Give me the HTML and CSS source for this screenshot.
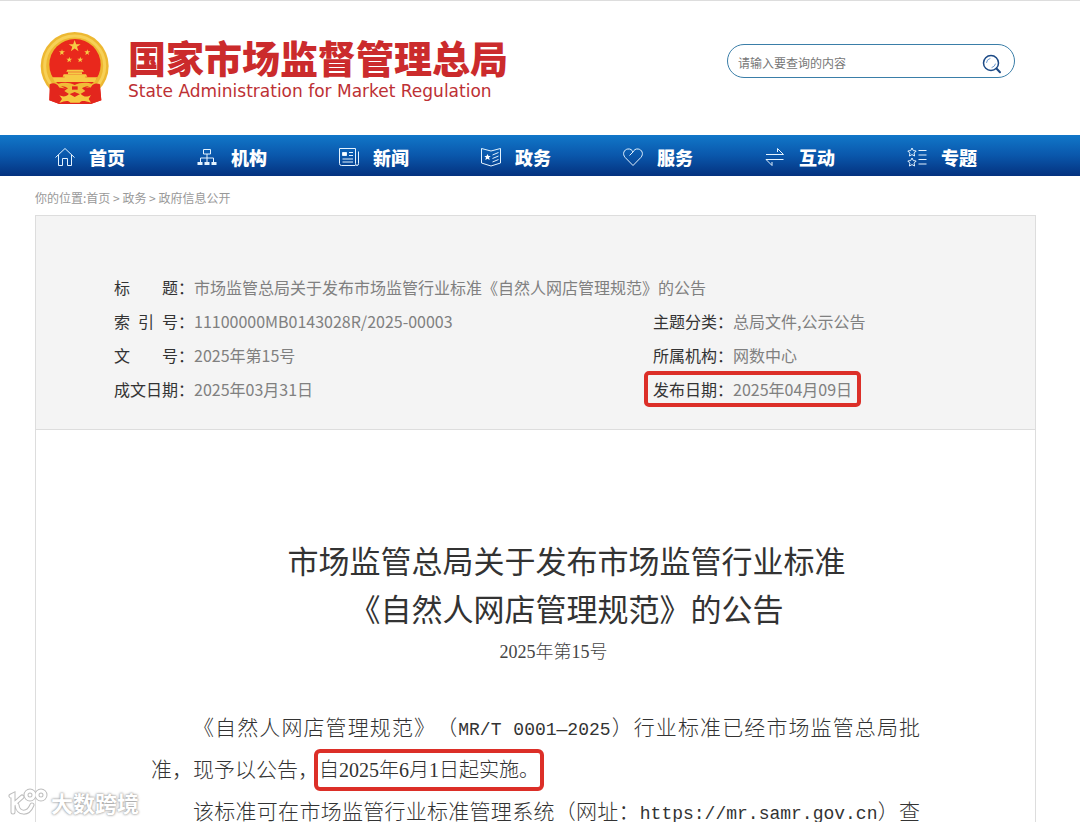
FILE: index.html
```html
<!DOCTYPE html>
<html lang="zh-CN">
<head>
<meta charset="utf-8">
<meta name="viewport" content="width=device-width, initial-scale=1">
<title>国家市场监督管理总局</title>
<link rel="stylesheet" href="styles.css">
</head>
<body>
<header class="header">
  <div class="brand">
    <svg class="emblem" viewBox="0 0 210 218" aria-hidden="true">
      <path fill="#e3261d" d="M32 150 28 206 58 217H152L184 206 178 150Z"/>
      <circle cx="104" cy="103" r="102" fill="#edb832"/>
      <circle cx="104" cy="103" r="90" fill="none" stroke="#f7d056" stroke-width="9"/>
      <circle cx="105" cy="99" r="77" fill="#e9281c"/>
      <g fill="#f6cb45">
        <path d="M104 25l4.500 12.500h13.500l-11 8 4.500 13-11.500-8-11.500 8 4.500-13-11-8h13.500z"/>
        <path d="M66 53l2 6h7l-6 4 2 7-5-4-6 4 2-7-5-4h7zM142 53l2 6h7l-6 4 2 7-5-4-6 4 2-7-5-4h7zM88 75l2 6h7l-6 4 2 7-5-4-6 4 2-7-5-4h7zM121 75l2 6h7l-6 4 2 7-5-4-6 4 2-7-5-4h7z"/>
        <path d="M82 114H128L132 120H79ZM84 122H126V127H84ZM71 128H138L142 135H136V139H74V135H68Z"/>
        <path d="M37 137H172L164 151H44Z"/>
      </g>
      <path fill="#e3261d" d="M29 158C40 151 52 156 60 168L82 171 104 153 128 170 150 167C160 154 170 153 180 158L184 206 152 217H58L28 206Z"/>
      <path fill="#f0bd37" d="M52 157C68 152 87 151 104 160 121 151 143 152 158 157L152 168C145 160 133 164 126 170L136 178 120 188 104 181 88 188 73 178 84 170C74 163 64 161 58 168Z"/>
      <path fill="#f6c940" d="M58 190C70 198 80 194 87 186L104 196 122 186C130 195 140 198 153 190L146 202 153 213C135 207 123 205 119 213H91C86 205 74 207 58 214L66 202Z"/>
      <path fill="#e3261d" d="M96 164h17v10H96z"/>
    </svg>
    <div class="brand-text">
      <h1 class="brand-name">国家市场监督管理总局</h1>
      <p class="brand-en">State Administration for Market Regulation</p>
    </div>
  </div>
  <form class="search" role="search">
    <input class="search-input" type="text" placeholder="请输入要查询的内容" aria-label="请输入要查询的内容">
    <button class="search-button" type="button" aria-label="搜索">
      <svg viewBox="0 0 20 20" width="20" height="20" fill="none" stroke="#1c4a86" stroke-linecap="round" aria-hidden="true">
        <circle cx="9" cy="9" r="7.500" stroke-width="1.500"/>
        <path d="M4.500 8.500A4.500 4.500 0 0 1 8 4.500M10 13.500A5 5 0 0 0 13.500 10" stroke="#6d9bd0"/>
        <path d="M14.500 14.500 18 18.300" stroke-width="2"/>
      </svg>
    </button>
  </form>
</header>

<nav class="nav">
  <a class="nav-item" href="#"><svg class="nav-icon" viewBox="0 0 20 20" aria-hidden="true"><path d="M.5 10.500 10 1.500 19.500 10.500M3.500 8V18.500H7.500V11.500H12.500V18.500H16.500V8"/></svg>首页</a>
  <a class="nav-item" href="#"><svg class="nav-icon" viewBox="0 0 20 20" aria-hidden="true"><path d="M6.500 2.500h7v4.500h-7zM10 7v4M3.500 15V11H16.500V15M10 11v4"/><path d="M.5 16.500H5.500M7.500 16.500h5M14.500 16.500h5" stroke-width="3"/></svg>机构</a>
  <a class="nav-item" href="#"><svg class="nav-icon" viewBox="0 0 20 20" aria-hidden="true"><path d="M16.500 18.500H2.500Q.5 18.500.5 16.500V1.500H16.500V16.500Q16.500 18.500 18 18.500 19.500 18.500 19.500 16.500V4.500M10 5.500h4M10 8.500h4M3.500 12h10.500M3.500 15h10.500"/><path d="M3.500 5.500h4v3h-4z" fill="#fff"/></svg>新闻</a>
  <a class="nav-item" href="#"><svg class="nav-icon" viewBox="0 0 20 20" aria-hidden="true"><path d="M.5 1.500 10 4 19.500 1.500V16L10 19 .5 16ZM11.500 8l6-2.500M11.500 11.500l6-2.500M11.500 15l6-2.500"/><path d="M6.500 7l1 2h2.200l-1.700 1.600.7 2.400-2.200-1.300L4.300 13l.7-2.400L3.300 9h2.200z" fill="#fff" stroke="none"/></svg>政务</a>
  <a class="nav-item" href="#"><svg class="nav-icon" viewBox="0 0 20 20" aria-hidden="true"><path d="M10 18.500 2.200 10.500C-1 7 1 2.500 4.800 2 7.500 1.600 9 3 10 5 11 3 12.500 1.600 15.200 2 19 2.500 21 7 17.800 10.500ZM10 5 6.500 8.500"/></svg>服务</a>
  <a class="nav-item" href="#"><svg class="nav-icon" viewBox="0 0 20 20" aria-hidden="true"><path d="M1 7.500H18.500L12.500 1.500V5M18.500 12.500H1L7 18.500V15"/></svg>互动</a>
  <a class="nav-item" href="#"><svg class="nav-icon" viewBox="0 0 20 20" aria-hidden="true"><path d="M5 1l1.300 2.600 2.900.4-2.100 2.100.5 2.900L5 7.600 2.400 9l.5-2.900L.8 4l2.900-.4zM5 11l1.300 2.600 2.900.4-2.100 2.100.5 2.900L5 17.600 2.400 19l.5-2.900L.8 14l2.900-.4zM11.500 3.500h8M11.500 8h8M11.500 12.500h8M11.500 17h8"/></svg>专题</a>
</nav>

<main class="main">
  <div class="crumbs">你的位置:<a href="#">首页</a> &gt; <a href="#">政务</a> &gt; <a href="#">政府信息公开</a></div>

  <dl class="info">
    <div class="field field-wide"><dt><span class="spread">标题</span>：</dt><dd>市场监管总局关于发布市场监管行业标准《自然人网店管理规范》的公告</dd></div>
    <div class="field"><dt><span class="spread">索引号</span>：</dt><dd>11100000MB0143028R/2025-00003</dd></div>
    <div class="field"><dt><span class="spread">主题分类</span>：</dt><dd>总局文件,公示公告</dd></div>
    <div class="field"><dt><span class="spread">文号</span>：</dt><dd>2025年第15号</dd></div>
    <div class="field"><dt><span class="spread">所属机构</span>：</dt><dd>网数中心</dd></div>
    <div class="field"><dt><span class="spread">成文日期</span>：</dt><dd>2025年03月31日</dd></div>
    <div class="field marked"><dt><span class="spread">发布日期</span>：</dt><dd>2025年04月09日</dd></div>
  </dl>

  <article class="article">
    <h2 class="title">市场监管总局关于发布市场监管行业标准</h2>
    <h2 class="title">《自然人网店管理规范》的公告</h2>
    <p class="number">2025年第15号</p>
    <div class="text">
      <p>《自然人网店管理规范》（<span class="code">MR/T 0001—2025</span>）行业标准已经市场监管总局批准，现予以公告，<mark class="marked-text">自2025年6月1日起实施。</mark></p>
      <p class="full">该标准可在市场监管行业标准管理系统（网址：<a class="code" href="#">https://mr.samr.gov.cn</a>）查</p>
    </div>
  </article>
</main>

<div class="watermark">
  <svg viewBox="0 0 40 28" width="40" height="28" fill="none" stroke-linecap="round" aria-hidden="true">
    <g stroke="#bdbdbd" stroke-width="5"><path d="M3 8 5 7V24M5 17 14 9M9 17C10 26 20 27 24 17"/><circle cx="22" cy="7" r="4"/><circle cx="33" cy="7" r="4"/></g>
    <g stroke="#fff" stroke-width="3"><path d="M3 8 5 7V24M5 17 14 9M9 17C10 26 20 27 24 17"/><circle cx="22" cy="7" r="4"/><circle cx="33" cy="7" r="4"/></g>
  </svg>
  <span>大数跨境</span>
</div>
</body>
</html>
```

FILE: styles.css
```css
* {
  box-sizing: border-box;
}

body {
  position: relative;
  display: flex;
  flex-direction: column;
  height: 100vh;
  margin: 0;
  overflow: hidden;
  background: #fff;
  color: #333;
  font-family: "Noto Sans CJK SC", sans-serif;
  font-size: 16px;
  text-spacing-trim: space-all;
}

h1, h2, p, dl, dd {
  margin: 0;
}

a {
  color: inherit;
  text-decoration: none;
}

.header {
  display: flex;
  flex: none;
  align-items: flex-start;
  justify-content: space-between;
  height: 135px;
  padding: 0 65px 0 40px;
  border-top: 1px solid #ddd;
}

.brand {
  display: flex;
  gap: 18px;
  padding-top: 30px;
}

.emblem {
  width: 70px;
  height: 74px;
}

.brand-text {
  padding-top: 4px;
}

.brand-name {
  color: #cb2b2c;
  font-size: 38px;
  font-weight: 900;
  line-height: 44px;
}

.brand-en {
  color: #bd3034;
  font-family: "DejaVu Sans", sans-serif;
  font-size: 17px;
  line-height: 24px;
}

.search {
  display: flex;
  align-items: center;
  width: 288px;
  height: 34px;
  margin-top: 43px;
  padding: 2px 12px 0 10px;
  border: 1px solid #3a7ea8;
  border-radius: 17px;
}

.search-input {
  flex: 1;
  min-width: 0;
  padding: 0;
  border: 0;
  outline: 0;
  background: none;
  font-family: inherit;
  font-size: 12px;
}

.search-input::placeholder {
  color: #777;
}

.search-button {
  display: flex;
  padding: 4px 0 0;
  border: 0;
  background: none;
}

.nav {
  display: grid;
  flex: none;
  grid-template-columns: repeat(7, 1fr);
  height: 41px;
  padding: 0 31px 0 55px;
  background: linear-gradient(#1177c9, #0a57ab 50%, #04327f);
}

.nav-item {
  display: flex;
  gap: 14px;
  align-items: center;
  padding-top: 3px;
  color: #fff;
  font-size: 18px;
  font-weight: 900;
}

.nav-icon {
  width: 20px;
  height: 20px;
  fill: none;
  stroke: #e4f3ff;
}

.main {
  display: flex;
  flex: 1;
  flex-direction: column;
  margin: 0 44px 0 35px;
}

.crumbs {
  padding: 11px 0 6px;
  color: #999;
  font-size: 12px;
  line-height: 22px;
}

.info {
  display: grid;
  grid-template-columns: 539px 1fr;
  padding: 54px 78px 23px;
  border: 1px solid #ddd;
  background: #f4f4f4;
  line-height: 34px;
}

.field {
  display: flex;
}

.field-wide {
  grid-column: 1 / -1;
}

.field dt {
  flex: none;
  width: 80px;
  color: #333;
}

.field dd {
  color: #808080;
}

.spread {
  display: inline-block;
  width: 64px;
  text-align: justify;
  text-align-last: justify;
  vertical-align: top;
}

.marked {
  justify-self: start;
  height: 28px;
  margin: 3px -5px;
  padding: 0 5px;
  border-radius: 1px;
  outline: 4px solid #dc2f28;
  line-height: 28px;
}

.article {
  flex: 1;
  padding: 106px 115px 0;
  border: solid #ddd;
  border-width: 0 1px;
}

.title {
  color: #333;
  font-size: 31px;
  font-weight: 400;
  line-height: 48px;
  text-align: center;
  text-indent: 2em;
}

.number {
  margin-top: 3px;
  color: #444;
  font-family: "Liberation Serif", "Noto Sans CJK SC", serif;
  font-size: 18px;
  font-weight: 300;
  line-height: 34px;
  text-align: center;
  text-indent: 2em;
}

.text {
  margin-top: 38px;
  color: #333;
  font-family: "Liberation Serif", "Noto Sans CJK SC", serif;
  font-size: 21px;
  font-weight: 300;
  line-height: 42px;
  text-align: justify;
  text-indent: 2em;
}

.full {
  text-align-last: justify;
}

.code {
  font-family: "Liberation Mono", monospace;
  font-size: 18px;
  line-height: 1;
}

.marked-text {
  padding: 5px 0;
  border-radius: 1px;
  outline: 4px solid #dc2f28;
  outline-offset: 1px;
  background: none;
  color: inherit;
  font-size: 20px;
  line-height: 1;
}

.watermark {
  position: absolute;
  bottom: 5px;
  left: 8px;
  display: flex;
  gap: 3px;
  align-items: center;
  color: #fff;
  font-size: 22px;
  font-weight: 700;
  line-height: 30px;
  text-shadow: 0 0 2px #999, 0 0 3px #aaa;
}
```
